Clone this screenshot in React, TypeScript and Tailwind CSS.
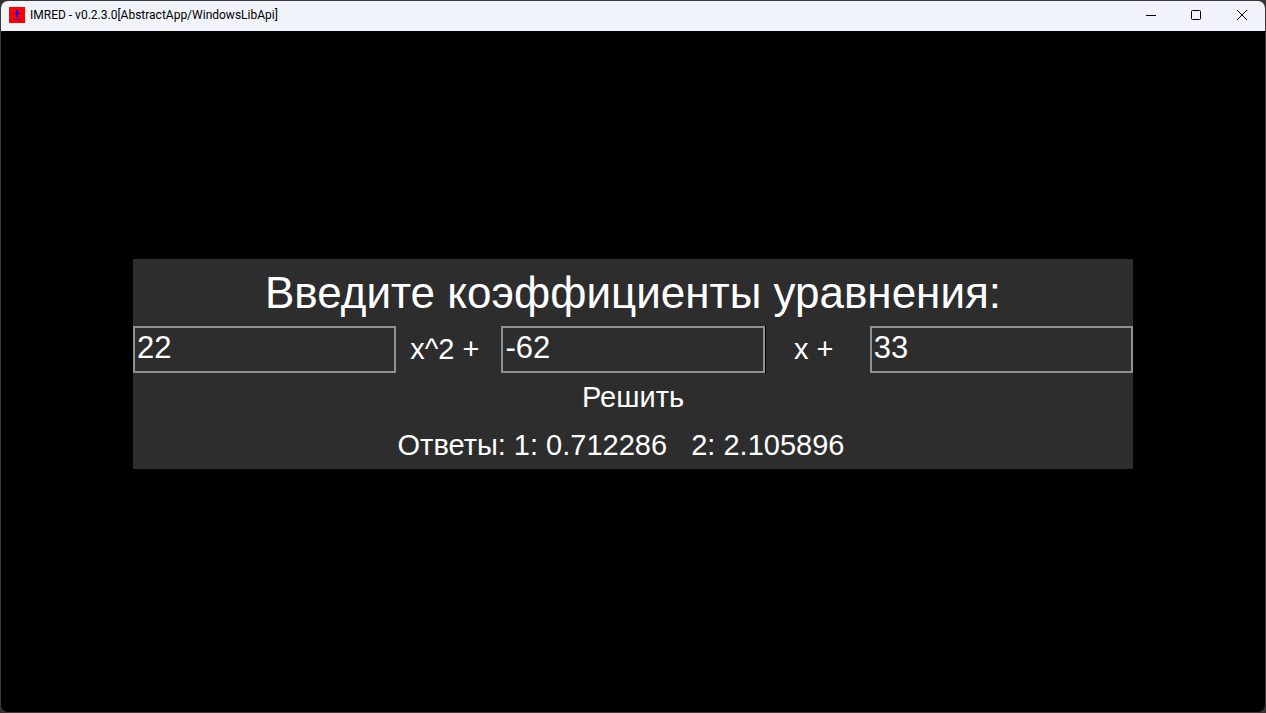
import { useState } from "react";
import type { FormEvent } from "react";

function AppIcon() {
  return (
    <svg width="16" height="16" viewBox="0 0 16 16" aria-hidden="true" className="shrink-0">
      <rect width="16" height="16" fill="#ff0000" />
      <path d="M8 3v7" stroke="#1a00ff" strokeWidth="2" fill="none" />
      <path d="M5 6.5h6M5 12.5h6" stroke="#1a00ff" strokeWidth="1.2" fill="none" />
    </svg>
  );
}

function TitleBar() {
  const button = "flex h-[28px] w-[46px] items-center justify-center hover:bg-black/5";
  return (
    <header className="flex h-[30px] shrink-0 items-center bg-[#f0f3fa] pb-[2px] pl-2 text-black">
      <AppIcon />
      <h1 className="ml-[5px] flex-1 truncate font-[Roboto,'Open_Sans',sans-serif] text-[12px] leading-4">
        IMRED - v0.2.3.0[AbstractApp/WindowsLibApi]
      </h1>
      <button type="button" aria-label="Minimize" className={button}>
        <svg width="12" height="12" viewBox="0 0 12 12">
          <path d="M2 6.5h10" stroke="currentColor" fill="none" />
        </svg>
      </button>
      <button type="button" aria-label="Maximize" className={button}>
        <svg width="12" height="12" viewBox="0 0 12 12">
          <rect x="1.5" y="1.5" width="9" height="9" rx="1" stroke="currentColor" fill="none" />
        </svg>
      </button>
      <button type="button" aria-label="Close" className={button}>
        <svg width="12" height="12" viewBox="0 0 12 12">
          <path d="M1 1l10 10M11 1L1 11" stroke="currentColor" fill="none" />
        </svg>
      </button>
    </header>
  );
}

type FieldProps = { id: string; label: string; value: string; onChange: (value: string) => void };

function CoefficientInput({ id, label, value, onChange }: FieldProps) {
  return (
    <input
      id={id}
      aria-label={label}
      type="text"
      value={value}
      onChange={(event) => onChange(event.target.value)}
      className="h-[47px] w-full min-w-0 border-2 border-[#909090] bg-[#2d2d2d] pb-[2px] pl-[2px] text-[31px] leading-[38px] outline-none"
    />
  );
}

function solve(a: number, b: number, c: number): [string, string] {
  const root = Math.sqrt(b * b - 4 * a * c);
  return [((-b - root) / (2 * a)).toFixed(6), ((-b + root) / (2 * a)).toFixed(6)];
}

export default function App() {
  const [a, setA] = useState("22");
  const [b, setB] = useState("-62");
  const [c, setC] = useState("33");
  const [answers, setAnswers] = useState(solve(22, -62, 33));

  const submit = (event: FormEvent) => {
    event.preventDefault();
    setAnswers(solve(Number(a), Number(b), Number(c)));
  };

  return (
    <div className="min-h-screen bg-[#333333]">
      <div className="flex min-h-screen flex-col overflow-hidden rounded-lg border border-[#3a3a3a] bg-black">
        <TitleBar />
        <main className="flex flex-1 items-center justify-center pb-4">
          <form
            onSubmit={submit}
            className="w-full max-w-[1000px] bg-[#2d2d2d] font-['Liberation_Sans',Arial,sans-serif] text-[29px] leading-[48px] text-white"
          >
            <h2 className="text-center text-[44px] leading-[67px]">Введите коэффициенты уравнения:</h2>
            <div className="grid grid-cols-[5fr_2fr_5fr_2fr_5fr] items-center">
              <CoefficientInput id="a" label="a" value={a} onChange={setA} />
              <label htmlFor="a" className="pr-2 text-center leading-[47px] whitespace-nowrap">
                x^2 +
              </label>
              <CoefficientInput id="b" label="b" value={b} onChange={setB} />
              <label htmlFor="b" className="border-l border-black pr-2 text-center leading-[47px] whitespace-nowrap">
                x +
              </label>
              <CoefficientInput id="c" label="c" value={c} onChange={setC} />
            </div>
            <button type="submit" className="block w-full text-center">
              Решить
            </button>
            <output htmlFor="a b c" className="block pr-6 text-center whitespace-pre">
              {`Ответы: 1: ${answers[0]}   2: ${answers[1]}`}
            </output>
          </form>
        </main>
      </div>
    </div>
  );
}
